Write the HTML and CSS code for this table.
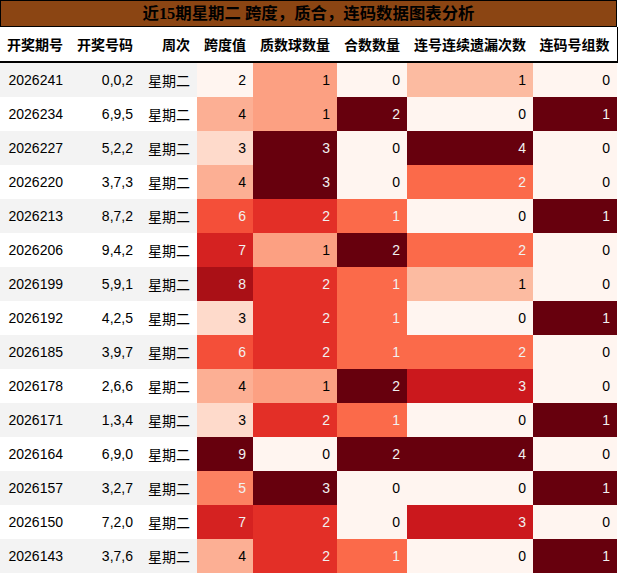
FILE: index.html
```html
<!DOCTYPE html>
<html lang="zh">
<head>
<meta charset="utf-8">
<title>近15期星期二 跨度，质合，连码数据图表分析</title>
<link rel="stylesheet" href="styles.css">
</head>
<body>
<div class="wrap">
  <div class="title">近15期星期二 跨度，质合，连码数据图表分析</div>
  <table class="grid">
    <colgroup>
      <col class="c1"><col class="c2"><col class="c3"><col class="c4"><col class="c5"><col class="c6"><col class="c7"><col class="c8">
    </colgroup>
    <thead>
      <tr><th>开奖期号</th><th>开奖号码</th><th>周次</th><th>跨度值</th><th>质数球数量</th><th>合数数量</th><th>连号连续遗漏次数</th><th class="last">连码号组数</th></tr>
    </thead>
    <tbody>
      <tr><td>2026241</td><td>0,0,2</td><td>星期二</td><td class="s2">2</td><td class="p1">1</td><td class="h0">0</td><td class="l1">1</td><td class="g0">0</td></tr>
      <tr><td>2026234</td><td>6,9,5</td><td>星期二</td><td class="s4">4</td><td class="p1">1</td><td class="h2">2</td><td class="l0">0</td><td class="g1">1</td></tr>
      <tr><td>2026227</td><td>5,2,2</td><td>星期二</td><td class="s3">3</td><td class="p3">3</td><td class="h0">0</td><td class="l4">4</td><td class="g0">0</td></tr>
      <tr><td>2026220</td><td>3,7,3</td><td>星期二</td><td class="s4">4</td><td class="p3">3</td><td class="h0">0</td><td class="l2">2</td><td class="g0">0</td></tr>
      <tr><td>2026213</td><td>8,7,2</td><td>星期二</td><td class="s6">6</td><td class="p2">2</td><td class="h1">1</td><td class="l0">0</td><td class="g1">1</td></tr>
      <tr><td>2026206</td><td>9,4,2</td><td>星期二</td><td class="s7">7</td><td class="p1">1</td><td class="h2">2</td><td class="l2">2</td><td class="g0">0</td></tr>
      <tr><td>2026199</td><td>5,9,1</td><td>星期二</td><td class="s8">8</td><td class="p2">2</td><td class="h1">1</td><td class="l1">1</td><td class="g0">0</td></tr>
      <tr><td>2026192</td><td>4,2,5</td><td>星期二</td><td class="s3">3</td><td class="p2">2</td><td class="h1">1</td><td class="l0">0</td><td class="g1">1</td></tr>
      <tr><td>2026185</td><td>3,9,7</td><td>星期二</td><td class="s6">6</td><td class="p2">2</td><td class="h1">1</td><td class="l2">2</td><td class="g0">0</td></tr>
      <tr><td>2026178</td><td>2,6,6</td><td>星期二</td><td class="s4">4</td><td class="p1">1</td><td class="h2">2</td><td class="l3">3</td><td class="g0">0</td></tr>
      <tr><td>2026171</td><td>1,3,4</td><td>星期二</td><td class="s3">3</td><td class="p2">2</td><td class="h1">1</td><td class="l0">0</td><td class="g1">1</td></tr>
      <tr><td>2026164</td><td>6,9,0</td><td>星期二</td><td class="s9">9</td><td class="p0">0</td><td class="h2">2</td><td class="l4">4</td><td class="g0">0</td></tr>
      <tr><td>2026157</td><td>3,2,7</td><td>星期二</td><td class="s5">5</td><td class="p3">3</td><td class="h0">0</td><td class="l0">0</td><td class="g1">1</td></tr>
      <tr><td>2026150</td><td>7,2,0</td><td>星期二</td><td class="s7">7</td><td class="p2">2</td><td class="h0">0</td><td class="l3">3</td><td class="g0">0</td></tr>
      <tr><td>2026143</td><td>3,7,6</td><td>星期二</td><td class="s4">4</td><td class="p2">2</td><td class="h1">1</td><td class="l0">0</td><td class="g1">1</td></tr>
    </tbody>
  </table>
</div>
</body>
</html>
```

FILE: styles.css
```css
html, body {
  margin: 0;
  padding: 0;
  background: #ffffff;
}

.wrap {
  width: 617px;
}

.title {
  box-sizing: border-box;
  height: 27px;
  border: 1px solid #000;
  background: #8b4513;
  color: #000;
  font-family: "Liberation Serif", "Noto Sans CJK SC", serif;
  font-weight: bold;
  font-size: 16.4px;
  line-height: 25px;
  text-align: center;
}

.grid {
  width: 617px;
  border-collapse: collapse;
  table-layout: fixed;
  font-family: "Liberation Sans", "Noto Sans CJK SC", sans-serif;
  font-size: 14px;
  color: #000;
}

.c1 { width: 70px; }
.c2 { width: 70px; }
.c3 { width: 57px; }
.c4 { width: 56px; }
.c5 { width: 84px; }
.c6 { width: 70px; }
.c7 { width: 126px; }
.c8 { width: 84px; }

.grid th {
  height: 34px;
  padding: 0 7px 0 0;
  text-align: right;
  font-weight: bold;
  white-space: nowrap;
  border-bottom: 2px solid #000;
  background: #fff;
}

.grid th.last {
  border-right: 1px solid #000;
}

.grid td {
  height: 34px;
  padding: 0 7px 0 0;
  text-align: right;
  white-space: nowrap;
  background: #fff;
}

.grid tbody tr:nth-child(odd) td {
  background: #f3f3f3;
}

/* 跨度值 gradient */
.grid tbody tr td.s2 { background: #fff5f0; color: #000; }
.grid tbody tr td.s3 { background: #fedacb; color: #000; }
.grid tbody tr td.s4 { background: #fcaf94; color: #000; }
.grid tbody tr td.s5 { background: #fc8161; color: #f1f1f1; }
.grid tbody tr td.s6 { background: #f44f39; color: #f1f1f1; }
.grid tbody tr td.s7 { background: #d52221; color: #f1f1f1; }
.grid tbody tr td.s8 { background: #aa1016; color: #f1f1f1; }
.grid tbody tr td.s9 { background: #67000d; color: #f1f1f1; }

/* 质数球数量 gradient */
.grid tbody tr td.p0 { background: #fff5f0; color: #000; }
.grid tbody tr td.p1 { background: #fca082; color: #000; }
.grid tbody tr td.p2 { background: #e32f27; color: #f1f1f1; }
.grid tbody tr td.p3 { background: #67000d; color: #f1f1f1; }

/* 合数数量 gradient */
.grid tbody tr td.h0 { background: #fff5f0; color: #000; }
.grid tbody tr td.h1 { background: #fb6a4a; color: #f1f1f1; }
.grid tbody tr td.h2 { background: #67000d; color: #f1f1f1; }

/* 连号连续遗漏次数 gradient */
.grid tbody tr td.l0 { background: #fff5f0; color: #000; }
.grid tbody tr td.l1 { background: #fcbba1; color: #000; }
.grid tbody tr td.l2 { background: #fb6a4a; color: #f1f1f1; }
.grid tbody tr td.l3 { background: #cb181d; color: #f1f1f1; }
.grid tbody tr td.l4 { background: #67000d; color: #f1f1f1; }

/* 连码号组数 gradient */
.grid tbody tr td.g0 { background: #fff5f0; color: #000; }
.grid tbody tr td.g1 { background: #67000d; color: #f1f1f1; }
```
